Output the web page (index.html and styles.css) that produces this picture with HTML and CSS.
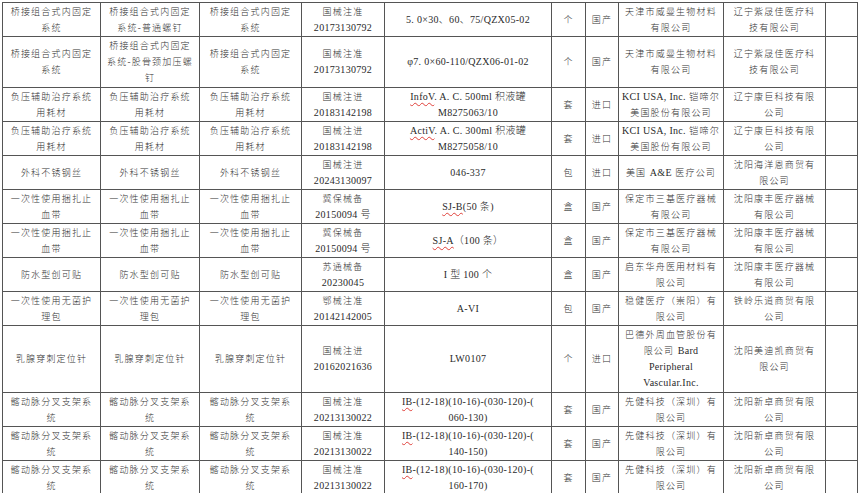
FILE: index.html
```html
<!DOCTYPE html>
<html lang="zh-CN">
<head>
<meta charset="utf-8">
<title>耗材目录</title>
<link rel="stylesheet" href="styles.css">
</head>
<body>
<table class="grid">
<colgroup>
<col class="c1"><col class="c2"><col class="c3"><col class="c4"><col class="c5"><col class="c6"><col class="c7"><col class="c8"><col class="c9"><col class="c10">
</colgroup>
<tbody>
<tr class="r2">
<td>桥接组合式内固定<br>系统</td>
<td>桥接组合式内固定<br>系统-普通螺钉</td>
<td>桥接组合式内固定<br>系统</td>
<td>国械注准<br><span class="lat">20173130792</span></td>
<td class="lat">5. 0×30、60、75/QZX05-02</td>
<td>个</td>
<td>国产</td>
<td>天津市威曼生物材料<br>有限公司</td>
<td>辽宁紫晟佳医疗科<br>技有限公司</td>
<td></td>
</tr>
<tr class="r3">
<td>桥接组合式内固定<br>系统</td>
<td>桥接组合式内固定<br>系统-股骨颈加压螺<br>钉</td>
<td>桥接组合式内固定<br>系统</td>
<td>国械注准<br><span class="lat">20173130792</span></td>
<td class="lat">φ7. 0×60-110/QZX06-01-02</td>
<td>个</td>
<td>国产</td>
<td>天津市威曼生物材料<br>有限公司</td>
<td>辽宁紫晟佳医疗科<br>技有限公司</td>
<td></td>
</tr>
<tr class="r2">
<td>负压辅助治疗系统<br>用耗材</td>
<td>负压辅助治疗系统<br>用耗材</td>
<td>负压辅助治疗系统<br>用耗材</td>
<td>国械注进<br><span class="lat">20183142198</span></td>
<td class="lat"><span class="spell">InfoV</span>. A. C. 500ml 积液罐<br>M8275063/10</td>
<td>套</td>
<td>进口</td>
<td><span class="lat">KCI USA, Inc.</span> 铠啼尔<br>美国股份有限公司</td>
<td>辽宁康巨科技有限<br>公司</td>
<td></td>
</tr>
<tr class="r2">
<td>负压辅助治疗系统<br>用耗材</td>
<td>负压辅助治疗系统<br>用耗材</td>
<td>负压辅助治疗系统<br>用耗材</td>
<td>国械注进<br><span class="lat">20183142198</span></td>
<td class="lat"><span class="spell">ActiV</span>. A. C. 300ml 积液罐<br>M8275058/10</td>
<td>套</td>
<td>进口</td>
<td><span class="lat">KCI USA, Inc.</span> 铠啼尔<br>美国股份有限公司</td>
<td>辽宁康巨科技有限<br>公司</td>
<td></td>
</tr>
<tr class="r2">
<td>外科不锈钢丝</td>
<td>外科不锈钢丝</td>
<td>外科不锈钢丝</td>
<td>国械注进<br><span class="lat">20243130097</span></td>
<td class="lat">046-337</td>
<td>包</td>
<td>进口</td>
<td>美国 <span class="lat">A&amp;E</span> 医疗公司</td>
<td>沈阳海洋恩商贸有<br>限公司</td>
<td></td>
</tr>
<tr class="r2">
<td>一次性使用捆扎止<br>血带</td>
<td>一次性使用捆扎止<br>血带</td>
<td>一次性使用捆扎止<br>血带</td>
<td>冀保械备<br><span class="lat">20150094 号</span></td>
<td class="lat"><span class="spell">SJ-B</span>(50 条)</td>
<td>盒</td>
<td>国产</td>
<td>保定市三基医疗器械<br>有限公司</td>
<td>沈阳康丰医疗器械<br>有限公司</td>
<td></td>
</tr>
<tr class="r2">
<td>一次性使用捆扎止<br>血带</td>
<td>一次性使用捆扎止<br>血带</td>
<td>一次性使用捆扎止<br>血带</td>
<td>冀保械备<br><span class="lat">20150094 号</span></td>
<td class="lat"><span class="spell">SJ-A</span>（100 条）</td>
<td>盒</td>
<td>国产</td>
<td>保定市三基医疗器械<br>有限公司</td>
<td>沈阳康丰医疗器械<br>有限公司</td>
<td></td>
</tr>
<tr class="r2">
<td>防水型创可贴</td>
<td>防水型创可贴</td>
<td>防水型创可贴</td>
<td>苏通械备<br><span class="lat">20230045</span></td>
<td class="lat">I 型 100 个</td>
<td>盒</td>
<td>国产</td>
<td>启东华舟医用材料有<br>限公司</td>
<td>沈阳康丰医疗器械<br>有限公司</td>
<td></td>
</tr>
<tr class="r2">
<td>一次性使用无菌护<br>理包</td>
<td>一次性使用无菌护<br>理包</td>
<td>一次性使用无菌护<br>理包</td>
<td>鄂械注准<br><span class="lat">20142142005</span></td>
<td class="lat">A-VI</td>
<td>包</td>
<td>国产</td>
<td>稳健医疗（崇阳）有<br>限公司</td>
<td>铁岭乐道商贸有限<br>公司</td>
<td></td>
</tr>
<tr class="r4">
<td>乳腺穿刺定位针</td>
<td>乳腺穿刺定位针</td>
<td>乳腺穿刺定位针</td>
<td>国械注进<br><span class="lat">20162021636</span></td>
<td class="lat">LW0107</td>
<td>个</td>
<td>进口</td>
<td>巴德外周血管股份有<br>限公司 <span class="lat">Bard</span><br><span class="lat">Peripheral</span><br><span class="lat">Vascular.Inc.</span></td>
<td>沈阳美迪凯商贸有<br>限公司</td>
<td></td>
</tr>
<tr class="r2">
<td>髂动脉分叉支架系<br>统</td>
<td>髂动脉分叉支架系<br>统</td>
<td>髂动脉分叉支架系<br>统</td>
<td>国械注准<br><span class="lat">20213130022</span></td>
<td class="lat"><span class="spell">IB</span>-(12-18)(10-16)-(030-120)-(<br>060-130)</td>
<td>套</td>
<td>国产</td>
<td>先健科技（深圳）有<br>限公司</td>
<td>沈阳新卓商贸有限<br>公司</td>
<td></td>
</tr>
<tr class="r2">
<td>髂动脉分叉支架系<br>统</td>
<td>髂动脉分叉支架系<br>统</td>
<td>髂动脉分叉支架系<br>统</td>
<td>国械注准<br><span class="lat">20213130022</span></td>
<td class="lat"><span class="spell">IB</span>-(12-18)(10-16)-(030-120)-(<br>140-150)</td>
<td>套</td>
<td>国产</td>
<td>先健科技（深圳）有<br>限公司</td>
<td>沈阳新卓商贸有限<br>公司</td>
<td></td>
</tr>
<tr class="r2">
<td>髂动脉分叉支架系<br>统</td>
<td>髂动脉分叉支架系<br>统</td>
<td>髂动脉分叉支架系<br>统</td>
<td>国械注准<br><span class="lat">20213130022</span></td>
<td class="lat"><span class="spell">IB</span>-(12-18)(10-16)-(030-120)-(<br>160-170)</td>
<td>套</td>
<td>国产</td>
<td>先健科技（深圳）有<br>限公司</td>
<td>沈阳新卓商贸有限<br>公司</td>
<td></td>
</tr>
</tbody>
</table>
</body>
</html>
```

FILE: styles.css
```css
html, body {
  margin: 0;
  padding: 0;
  background: #ffffff;
}

body {
  padding: 2px 0 0 2px;
  font-family: "Liberation Serif", "Noto Sans CJK SC", serif;
  font-size: 9px;
  font-weight: 300;
  letter-spacing: 1.2px;
  color: #333333;
}

.grid {
  border-collapse: collapse;
  table-layout: fixed;
  width: 855px;
}

.grid td {
  border: 1px solid #555555;
  padding: 0;
  text-align: center;
  vertical-align: middle;
  white-space: nowrap;
  overflow: hidden;
  line-height: 16px;
}

.r2 td { height: 33px; }
.r3 td { height: 50px; }
.r4 td { height: 66px; }

.c1 { width: 98px; }
.c2 { width: 99px; }
.c3 { width: 102px; }
.c4 { width: 83px; }
.c5 { width: 167px; }
.c6 { width: 34px; }
.c7 { width: 33px; }
.c8 { width: 105px; }
.c9 { width: 102px; }
.c10 { width: 32px; }

.grid .lat {
  font-size: 10px;
  font-weight: 300;
  letter-spacing: 0.3px;
  color: #2a2a2a;
}

.spell {
  text-decoration: underline wavy #e0403a;
  text-decoration-thickness: 1px;
  text-underline-offset: 2px;
}
```
